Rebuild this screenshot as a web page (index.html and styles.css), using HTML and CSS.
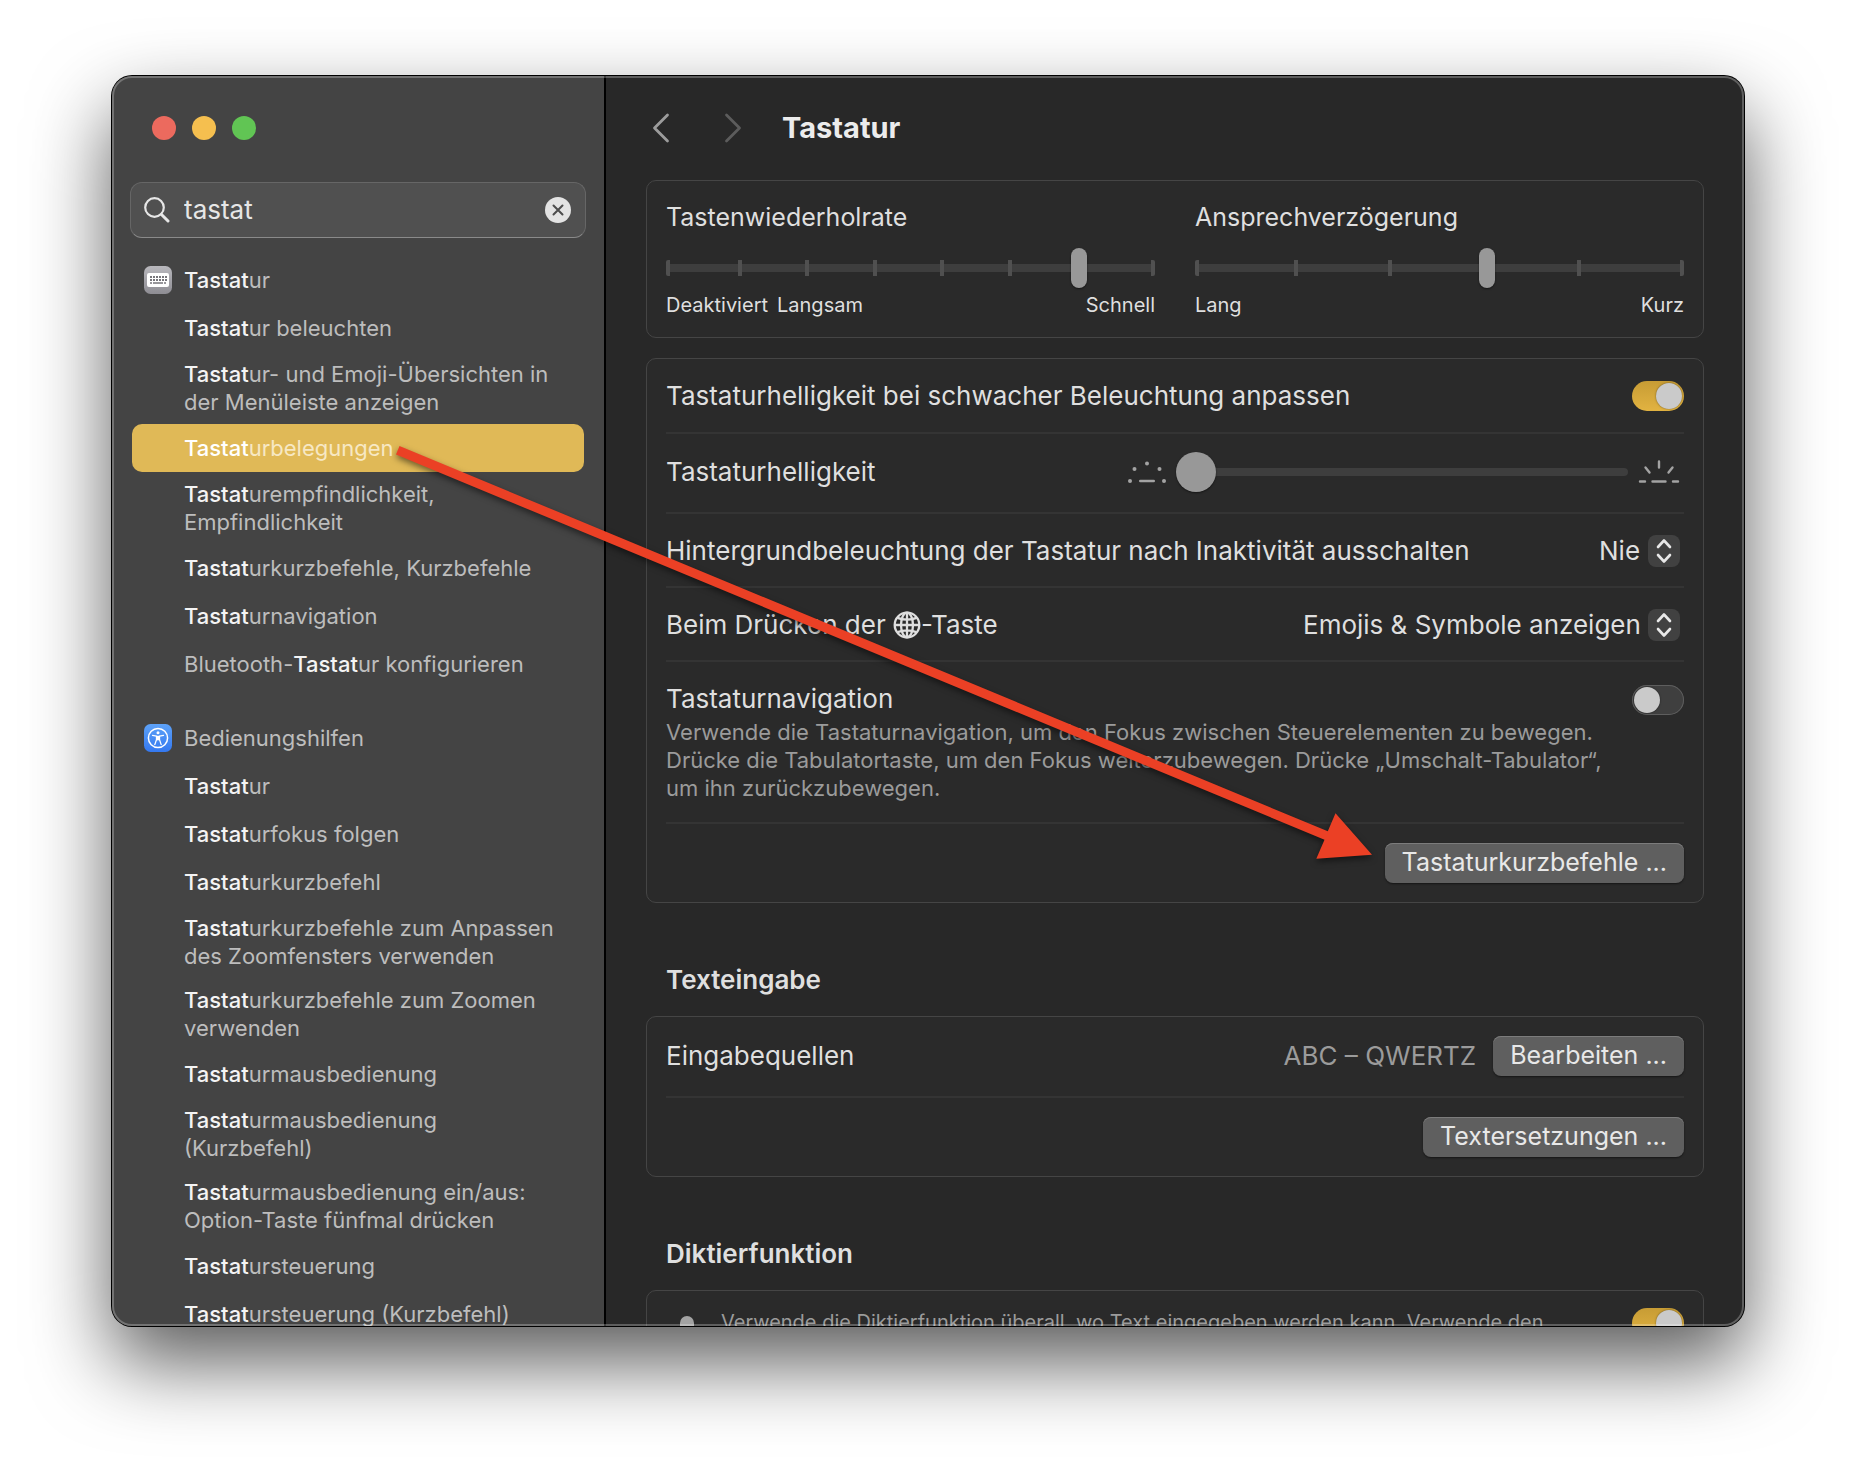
FILE: index.html
```html
<!DOCTYPE html>
<html lang="de">
<head>
<meta charset="utf-8">
<title>Tastatur</title>
<link rel="stylesheet" href="styles.css">
</head>
<body>
<div class="window">
  <aside class="sidebar">
    <div class="lights">
      <button class="light light-close" aria-label="Schließen"></button>
      <button class="light light-min" aria-label="Minimieren"></button>
      <button class="light light-zoom" aria-label="Vergrößern"></button>
    </div>
    <div class="search">
      <svg width="26" height="26" viewBox="0 0 26 26" fill="none" stroke="#e6e6e6" stroke-linecap="round"><circle cx="10.500" cy="10.500" r="9.300" stroke-width="2.200"/><path d="M17.500 17.500 24 24" stroke-width="3"/></svg>
      <input class="search-input" type="text" value="tastat" aria-label="Suchen">
      <button class="search-clear" aria-label="Löschen"><svg width="26" height="26" viewBox="0 0 26 26"><circle cx="13" cy="13" r="13" fill="#e3e3e3"/><path d="M8.500 8.500l9 9M17.500 8.500l-9 9" stroke="#4c4c4c" stroke-width="2" stroke-linecap="round"/></svg></button>
    </div>
    <nav class="results">
      <div class="group">
        <a class="result" href="#"><svg class="app-icon" width="28" height="28" viewBox="0 0 28 28"><defs><linearGradient id="kg" x2="0" y2="1"><stop stop-color="#b9b8bd"/><stop offset="1" stop-color="#8e8d93"/></linearGradient></defs><rect width="28" height="28" rx="6.500" fill="url(#kg)"/><rect x="3" y="7" width="22" height="14" rx="2" fill="#fff"/><path d="M6 11h17M6 14h17" stroke="#77767b" stroke-width="2" stroke-dasharray="2 1"/><path d="M6 17h2M9 17h10M20 17h2" stroke="#77767b" stroke-width="1.600"/></svg><span><mark>Tastat</mark>ur</span></a>
        <a class="result" href="#"><span><mark>Tastat</mark>ur beleuchten</span></a>
        <a class="result" href="#"><span><mark>Tastat</mark>ur- und Emoji-Übersichten in der Menüleiste anzeigen</span></a>
        <a class="result selected" href="#"><span><mark>Tastat</mark>urbelegungen</span></a>
        <a class="result" href="#"><span><mark>Tastat</mark>urempfindlichkeit, Empfindlichkeit</span></a>
        <a class="result" href="#"><span><mark>Tastat</mark>urkurzbefehle, Kurzbefehle</span></a>
        <a class="result" href="#"><span><mark>Tastat</mark>urnavigation</span></a>
        <a class="result" href="#"><span>Bluetooth-<mark>Tastat</mark>ur konfigurieren</span></a>
      </div>
      <div class="group">
        <a class="result" href="#"><svg class="app-icon" width="28" height="28" viewBox="0 0 28 28"><defs><linearGradient id="bg" x2="0" y2="1"><stop stop-color="#5da2f8"/><stop offset="1" stop-color="#3478f0"/></linearGradient></defs><rect width="28" height="28" rx="6.500" fill="url(#bg)"/><circle cx="14" cy="14" r="9.600" fill="none" stroke="#fff" stroke-width="1.500"/><circle cx="14" cy="8.700" r="1.500" fill="#fff"/><path d="M8.500 11.300l4 .8v3.500l-1.700 5M19.500 11.300l-4 .8v3.500l1.700 5" fill="none" stroke="#fff" stroke-width="1.300" stroke-linecap="round" stroke-linejoin="round"/><path d="M12.200 11.800h3.600v4.500h-3.600z" fill="#fff"/></svg><span>Bedienungshilfen</span></a>
        <a class="result" href="#"><span><mark>Tastat</mark>ur</span></a>
        <a class="result" href="#"><span><mark>Tastat</mark>urfokus folgen</span></a>
        <a class="result" href="#"><span><mark>Tastat</mark>urkurzbefehl</span></a>
        <a class="result" href="#"><span><mark>Tastat</mark>urkurzbefehle zum Anpassen des Zoomfensters verwenden</span></a>
        <a class="result" href="#"><span><mark>Tastat</mark>urkurzbefehle zum Zoomen verwenden</span></a>
        <a class="result" href="#"><span><mark>Tastat</mark>urmausbedienung</span></a>
        <a class="result" href="#"><span><mark>Tastat</mark>urmausbedienung (Kurzbefehl)</span></a>
        <a class="result" href="#"><span><mark>Tastat</mark>urmausbedienung ein/aus: Option-Taste fünfmal drücken</span></a>
        <a class="result" href="#"><span><mark>Tastat</mark>ursteuerung</span></a>
        <a class="result" href="#"><span><mark>Tastat</mark>ursteuerung (Kurzbefehl)</span></a>
      </div>
    </nav>
  </aside>

  <main class="main">
    <header class="header">
      <button class="nav-button" aria-label="Zurück"><svg width="18" height="30" viewBox="0 0 18 30" fill="none" stroke="#9c9c9c" stroke-width="2.800" stroke-linecap="round" stroke-linejoin="round"><path d="M15.500 2 2.500 15l13 13"/></svg></button>
      <button class="nav-button" aria-label="Vorwärts" disabled><svg width="18" height="30" viewBox="0 0 18 30" fill="none" stroke="#5c5c5c" stroke-width="2.800" stroke-linecap="round" stroke-linejoin="round"><path d="m2.500 2 13 13-13 13"/></svg></button>
      <h1 class="title">Tastatur</h1>
    </header>

    <section class="card rates">
      <div class="rate">
        <label for="repeat">Tastenwiederholrate</label>
        <div class="stepped">
          <div class="ticks"><i></i><i></i><i></i><i></i><i></i><i></i><i></i></div>
          <input class="step-range" id="repeat" type="range" min="0" max="7" value="6">
        </div>
        <div class="captions"><span>Deaktiviert</span><span>Langsam</span><span>Schnell</span></div>
      </div>
      <div class="rate">
        <label for="delay">Ansprechverzögerung</label>
        <div class="stepped">
          <div class="ticks"><i></i><i></i><i></i><i></i><i></i></div>
          <input class="step-range" id="delay" type="range" min="0" max="5" value="3">
        </div>
        <div class="captions"><span>Lang</span><span>Kurz</span></div>
      </div>
    </section>

    <section class="card">
      <div class="row">
        <label for="auto">Tastaturhelligkeit bei schwacher Beleuchtung anpassen</label>
        <input class="switch" id="auto" type="checkbox" checked>
      </div>
      <div class="row row-tall inset">
        <label for="bright">Tastaturhelligkeit</label>
        <div class="brightness">
          <svg width="38" height="24" viewBox="0 0 38 24" fill="#a3a3a3"><circle cx="2" cy="21" r="2"/><circle cx="36" cy="21" r="2"/><circle cx="6.500" cy="9" r="2"/><circle cx="31.500" cy="9" r="2"/><circle cx="19" cy="3.500" r="2"/><rect x="11" y="19.700" width="16" height="2.600" rx="1.300"/></svg>
          <input class="bright-range" id="bright" type="range" min="0" max="100" value="0">
          <svg width="42" height="24" viewBox="0 0 42 24" fill="none" stroke="#a3a3a3" stroke-width="2.400" stroke-linecap="round"><path d="M2 21.500h5M14.500 21.500h13M35 21.500h5M21 1.500v6M7.500 7.500l4 5M34.500 7.500l-4 5"/></svg>
        </div>
      </div>
      <div class="row row-popup inset">
        <label for="idle">Hintergrundbeleuchtung der Tastatur nach Inaktivität ausschalten</label>
        <div class="popup"><select id="idle"><option>Nie</option></select><svg width="32" height="32" viewBox="0 0 32 32"><rect width="32" height="32" rx="8" fill="#414141"/><path d="m10 12 6-6.500 6 6.500M10 20l6 6.500 6-6.500" fill="none" stroke="#e8e8e8" stroke-width="2.600" stroke-linecap="round" stroke-linejoin="round"/></svg></div>
      </div>
      <div class="row row-popup inset">
        <label for="globe">Beim Drücken der <svg class="globe" width="28" height="28" viewBox="0 0 28 28" fill="none" stroke="#dfdfdf" stroke-width="2.300"><circle cx="14" cy="14" r="12.300"/><ellipse cx="14" cy="14" rx="6" ry="12.300"/><path d="M14 1.700v24.600M1.700 14h24.600M4.500 6.800q9.500 3.600 19 0M4.500 21.200q9.500-3.600 19 0"/></svg>-Taste</label>
        <div class="popup"><select id="globe"><option>Emojis &amp; Symbole anzeigen</option></select><svg width="32" height="32" viewBox="0 0 32 32"><rect width="32" height="32" rx="8" fill="#414141"/><path d="m10 12 6-6.500 6 6.500M10 20l6 6.500 6-6.500" fill="none" stroke="#e8e8e8" stroke-width="2.600" stroke-linecap="round" stroke-linejoin="round"/></svg></div>
      </div>
      <div class="row row-text">
        <div class="copy">
          <label for="navi">Tastaturnavigation</label>
          <p class="note">Verwende die Tastaturnavigation, um den Fokus zwischen Steuerelementen zu bewegen.<br>Drücke die Tabulatortaste, um den Fokus weiterzubewegen. Drücke „Umschalt-Tabulator“,<br>um ihn zurückzubewegen.</p>
        </div>
        <input class="switch" id="navi" type="checkbox">
      </div>
      <div class="row row-tall">
        <button class="button">Tastaturkurzbefehle ...</button>
      </div>
    </section>

    <h2 class="heading">Texteingabe</h2>
    <section class="card">
      <div class="row row-tall">
        <span>Eingabequellen</span>
        <div class="value"><span>ABC – QWERTZ</span><button class="button">Bearbeiten ...</button></div>
      </div>
      <div class="row row-tall">
        <button class="button">Textersetzungen ...</button>
      </div>
    </section>

    <h2 class="heading">Diktierfunktion</h2>
    <section class="card">
      <div class="row row-dictation">
        <svg width="28" height="44" viewBox="0 0 28 44"><rect x="7" y="8" width="14" height="24" rx="7" fill="#a3a3a3"/><path d="M2 23v3a12 12 0 0 0 24 0v-3M14 38v5" fill="none" stroke="#a3a3a3" stroke-width="2"/></svg>
        <label class="hint" for="dictation">Verwende die Diktierfunktion überall, wo Text eingegeben werden kann. Verwende den</label>
        <input class="switch" id="dictation" type="checkbox" checked>
      </div>
    </section>
  </main>

  <svg class="arrow" width="1000" height="440" viewBox="0 0 1000 440"><path d="M19.500 16 947.800 401.300 955.500 383.300 992 424.700 936.300 428.700 944.500 409.700 16 24.500z" fill="#eb4025"/></svg>
</div>
</body>
</html>
```
FILE: styles.css
```css
* {
  box-sizing: border-box;
}

body {
  margin: 0;
  height: 100vh;
  padding: 76px 112px 148px;
  overflow: hidden;
  background: #fff;
  color: #dfdfdf;
  font: 26px/28px Inter, "Liberation Sans", sans-serif;
}

button,
input,
select {
  margin: 0;
  padding: 0;
  border: 0;
  background: none;
  color: inherit;
  font: inherit;
}

svg {
  display: block;
  flex: none;
}

.window {
  position: relative;
  display: grid;
  grid-template-columns: 494px minmax(0, 1fr);
  height: 100%;
  border-radius: 20px;
  background: #282828;
  box-shadow: 0 0 0 1px #000, 0 36px 80px rgba(0, 0, 0, 0.65);
}

.window::after {
  content: "";
  position: absolute;
  inset: 0;
  border: 2px solid rgba(255, 255, 255, 0.25);
  border-radius: 20px;
  pointer-events: none;
}

/* Sidebar */

.sidebar {
  overflow: hidden;
  padding: 40px 18px 0;
  border-right: 2px solid #000;
  border-radius: 20px 0 0 20px;
  background: #444;
}

.lights {
  display: flex;
  gap: 16px;
  padding-left: 22px;
}

.light {
  width: 24px;
  height: 24px;
  border-radius: 50%;
}

.light-close { background: #ec6a5e; }
.light-min { background: #f5bf4f; }
.light-zoom { background: #61c554; }

.search {
  display: flex;
  align-items: center;
  gap: 14px;
  height: 56px;
  margin: 42px 0 18px;
  padding: 0 14px 0 13px;
  border: 1px solid #666;
  border-bottom: 1px solid #8a8a8a;
  border-radius: 12px;
  background: #505050;
}

.search-input {
  flex: 1;
  min-width: 0;
  outline: 0;
  color: #e6e6e6;
}

.results {
  display: grid;
  gap: 26px;
  padding: 0 2px;
}

.result {
  display: flex;
  align-items: center;
  gap: 12px;
  min-height: 48px;
  padding: 8px 20px 8px 52px;
  border-radius: 10px;
  color: #bdbdbd;
  font-size: 22px;
  text-decoration: none;
}

.result:has(.app-icon) {
  padding-left: 12px;
}

.result mark {
  background: none;
  color: #f4f4f4;
  font-weight: 500;
}

.selected {
  background: #e0b957;
  color: #f7e8c4;
}

.selected mark {
  color: #fff;
}

/* Settings pane */

.main {
  overflow: hidden;
  padding: 0 40px;
  border-radius: 0 20px 20px 0;
}

.header {
  display: flex;
  align-items: center;
  height: 104px;
  padding-left: 6px;
}

.nav-button {
  width: 58px;
}

.nav-button:first-child {
  width: 72px;
}

.title {
  margin: 0;
  color: #ececec;
  font-size: 29px;
  font-weight: 700;
}

.card {
  margin-bottom: 20px;
  padding: 1px 19px 0;
  border: 1px solid #454545;
  border-radius: 10px;
  background: #2a2a2a;
}

.rates {
  display: grid;
  grid-template-columns: 1fr 1fr;
  gap: 40px;
  padding-top: 22px;
  padding-bottom: 20px;
}

.rate label {
  display: block;
  font-size: 25px;
}

.stepped {
  display: grid;
  align-items: center;
  height: 40px;
  margin: 17px 0 5px;
}

.ticks,
.step-range {
  grid-area: 1 / 1;
}

.ticks {
  display: flex;
  height: 16px;
  padding: 0 4px;
  border: solid #505050;
  border-width: 0 4px;
  border-radius: 2px;
  background: linear-gradient(#3e3e3e, #3e3e3e) center / 100% 8px no-repeat;
}

.ticks i {
  flex: 1;
  border-right: 4px solid #505050;
}

.ticks i:last-child {
  border-color: transparent;
}

.step-range,
.bright-range,
.switch {
  appearance: none;
}

.step-range {
  width: 100%;
  height: 40px;
}

.step-range::-webkit-slider-thumb {
  appearance: none;
  width: 16px;
  height: 40px;
  border-radius: 8px;
  background: #989898;
  box-shadow: 0 1px 2px rgba(0, 0, 0, 0.5);
}

.captions {
  display: flex;
  gap: 9px;
  font-size: 20px;
  line-height: 24px;
}

.captions span:last-child {
  margin-left: auto;
}

.row {
  display: flex;
  align-items: center;
  justify-content: space-between;
  min-height: 74px;
  border-bottom: 2px solid #343434;
}

.row-tall {
  min-height: 80px;
}

.row-tall:not(:last-child) {
  padding-bottom: 2px;
}

.row-popup {
  padding-top: 2px;
}

.row:last-child {
  min-height: 78px;
  border-bottom: 0;
}

.inset {
  padding-right: 4px;
}

.row > .button:only-child {
  margin-left: auto;
}

.row-text {
  align-items: flex-start;
  padding: 23px 0 20px;
}

.note {
  margin: 5px 0 0;
  color: #9b9b9b;
  font-size: 22px;
}

.switch {
  flex: none;
  width: 52px;
  height: 30px;
  padding: 2px;
  border-radius: 15px;
  background: #3f3f3f;
  box-shadow: inset 0 0 0 1px #5e5e5e;
}

.switch::before {
  content: "";
  display: block;
  width: 26px;
  height: 26px;
  border-radius: 50%;
  background: #cacaca;
  box-shadow: 0 0 2px rgba(0, 0, 0, 0.5);
}

.switch:checked {
  background: linear-gradient(#c79c35, #e2b341);
  box-shadow: none;
}

.switch:checked::before {
  margin-left: auto;
}

.brightness {
  display: flex;
  align-items: center;
  gap: 10px;
}

.bright-range {
  width: 452px;
  height: 40px;
}

.bright-range::-webkit-slider-runnable-track {
  height: 8px;
  border-radius: 4px;
  background: #3e3e3e;
}

.bright-range::-webkit-slider-thumb {
  appearance: none;
  width: 40px;
  height: 40px;
  margin-top: -16px;
  border-radius: 50%;
  background: #989898;
  box-shadow: 0 1px 2px rgba(0, 0, 0, 0.5);
}

.popup {
  display: grid;
  align-items: center;
}

.popup select,
.popup svg {
  grid-area: 1 / 1;
}

.popup select {
  appearance: none;
  height: 36px;
  padding-right: 39px;
  line-height: 36px;
}

.popup svg {
  justify-self: end;
  pointer-events: none;
}

.globe {
  display: inline-block;
  vertical-align: -5px;
}

.button {
  height: 40px;
  padding: 0 17px 2px;
  border-radius: 8px;
  background: #5f5f5f;
  box-shadow: inset 0 1px #7c7c7c, 0 1px 2px rgba(0, 0, 0, 0.5);
  color: #e8e8e8;
  font-size: 25px;
}

.value {
  display: flex;
  align-items: center;
  gap: 17px;
  color: #9b9b9b;
}

.heading {
  margin: 63px 20px 22px;
  font-size: 26px;
  line-height: 28px;
  font-weight: 600;
}

.row-dictation {
  align-items: flex-start;
  gap: 20px;
  padding: 16px 0 60px 7px;
}

.hint {
  flex: 1;
  color: #9b9b9b;
  font-size: 20px;
}

.arrow {
  position: absolute;
  top: 354px;
  left: 268px;
  filter: drop-shadow(0 3px 3px rgba(0, 0, 0, 0.5));
  pointer-events: none;
}
```
